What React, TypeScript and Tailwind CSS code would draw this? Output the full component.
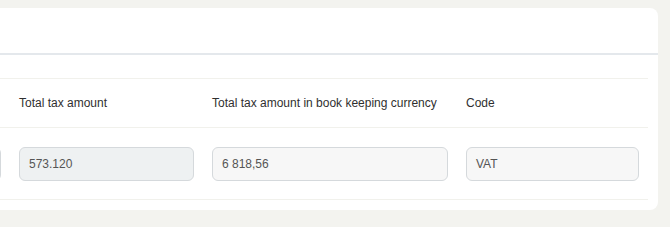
export default function App() {
  const font = { fontFamily: '"Liberation Sans", Arial, sans-serif' };

  return (
    <div
      className="h-[227px] w-[670px] overflow-hidden bg-[#f3f3ef] pt-2 pr-3"
      style={font}
    >
      <div className="-ml-5 flex h-[202px] flex-col rounded-lg bg-white">
        {/* card header */}
        <div className="h-[47px] shrink-0 border-b-2 border-[#e4e8ec]" />

        {/* table */}
        <div className="mt-[23px] mr-[10px] border-y border-[#f1f1ec]">
          {/* header row */}
          <div className="flex h-[49px] items-center border-b border-[#f1f1ec] text-[12px] text-[#2f2f2f]">
            <div className="w-[30px] shrink-0" />
            <div className="w-[193px] shrink-0 px-[9px]">Total tax amount</div>
            <div className="w-[254px] shrink-0 px-[9px]">
              Total tax amount in book keeping currency
            </div>
            <div className="flex-1 px-[9px]">Code</div>
          </div>

          {/* value row */}
          <div className="flex h-[71px] items-center text-[12px] text-[#555]">
            <div className="w-[30px] shrink-0 pr-[9px]">
              <div className="h-[34px] rounded-md border border-[#d5d9dc] bg-[#f6f7f7]" />
            </div>
            <div className="w-[193px] shrink-0 px-[9px]">
              <div className="flex h-[34px] items-center rounded-md border border-[#d5d9dc] bg-[#eef1f2] px-[9px]">
                573.120
              </div>
            </div>
            <div className="w-[254px] shrink-0 px-[9px]">
              <div className="flex h-[34px] items-center rounded-md border border-[#d5d9dc] bg-[#f7f7f7] px-[9px]">
                6 818,56
              </div>
            </div>
            <div className="flex-1 px-[9px]">
              <div className="flex h-[34px] items-center rounded-md border border-[#d5d9dc] bg-[#f7f7f7] px-[9px]">
                VAT
              </div>
            </div>
          </div>
        </div>
      </div>
    </div>
  );
}
